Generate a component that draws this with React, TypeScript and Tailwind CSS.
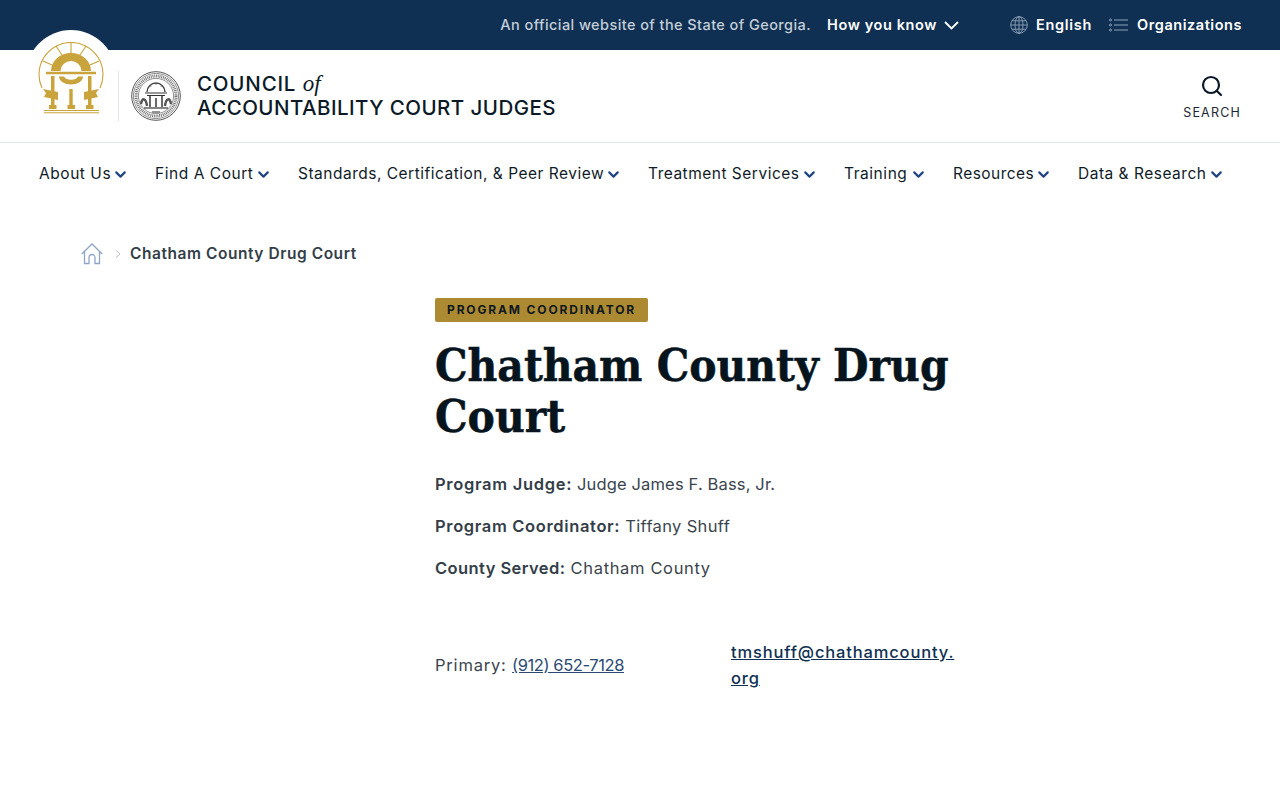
import React from 'react';
import { ChevronDown, Search, ChevronRight } from 'lucide-react';

const navItems = [
  { label: 'About Us', cls: 'w-[71px] tracking-[0.55px]' },
  { label: 'Find A Court', cls: 'w-[98px] tracking-[0.55px]' },
  { label: 'Standards, Certification, & Peer Review', cls: 'w-[305px] tracking-[0.5px]' },
  { label: 'Treatment Services', cls: 'w-[151px] tracking-[0.5px]' },
  { label: 'Training', cls: 'w-[64px] tracking-[0.55px]' },
  { label: 'Resources', cls: 'w-[80px] tracking-[0.45px]' },
  { label: 'Data & Research', cls: 'w-[128px] tracking-[0.5px]' },
];

const GoldArch = () => (
  <svg viewBox="0 0 66 74" className="w-[66px] h-[74px]" fill="none">
    <g stroke="#c9a33b" strokeWidth="1.1">
      <path d="M4 46 A 32 32 0 1 1 62 46" />
      <path d="M33 1 V11 M18 4 L24 13 M48 4 L42 13 M5 19 L14 23 M61 19 L52 23" />
    </g>
    <path d="M13 29 A20 18 0 0 1 53 29 H43.5 A10.5 10 0 0 0 22.5 29 Z" fill="#c9a33b" />
    <path d="M8 29.7 H58 V32.3 H8 Z" fill="#c9a33b" />
    <path d="M21 34.5 H26 A7.5 5 0 0 0 40 34.5 H45 A12 8 0 0 1 21 34.5 Z" fill="#c9a33b" />
    <path d="M13 34 H16.5 V64 H13 Z M31.3 47 H34.7 V64 H31.3 Z M50 34 H53.5 V64 H50 Z" fill="#c9a33b" />
    <path d="M5 47 L20 50 V58 L6 55 L8 51 Z M61 47 L46 50 V58 L60 55 L58 51 Z" fill="#c9a33b" />
    <path d="M11 63 H18.5 V67 H11 Z M29.5 63 H37 V67 H29.5 Z M48 63 H55.5 V67 H48 Z" fill="#c9a33b" />
    <path d="M6 68 H61 V69 H6 Z M6 70.3 H61 V71.3 H6 Z" fill="#c9a33b" />
  </svg>
);

const Seal = () => (
  <svg viewBox="0 0 50 50" className="w-[50px] h-[50px]" fill="none">
    <circle cx="25" cy="25" r="24.3" stroke="#555" strokeWidth="1" />
    <circle cx="25" cy="25" r="22.6" stroke="#444" strokeWidth="0.6" />
    <circle cx="25" cy="25" r="20" stroke="#777" strokeWidth="3" strokeDasharray="1 0.8" />
    <circle cx="25" cy="25" r="17.6" stroke="#444" strokeWidth="0.6" />
    <path d="M16 21 A 9 9 0 0 1 34 21" stroke="#444" strokeWidth="1.4" />
    <path d="M25 12 V14 M19 14 L20 16 M31 14 L30 16" stroke="#666" strokeWidth="0.8" />
    <path d="M14 22 H36 M16 24.5 H34" stroke="#333" strokeWidth="1.1" />
    <path d="M19 25 V36 M25 27 V36 M31 25 V36" stroke="#444" strokeWidth="1.6" />
    <path d="M10 33 C 11 26 15 27 16 35 M40 33 C 39 26 35 27 34 35" stroke="#555" strokeWidth="2.4" />
    <path d="M13 37 H37" stroke="#333" strokeWidth="1.2" />
    <path d="M21 41 H29" stroke="#666" strokeWidth="1.4" />
  </svg>
);

const GlobeLines = () => (
  <svg viewBox="0 0 18 18" className="w-[18px] h-[18px]" fill="none" stroke="#8fa3ba" strokeWidth="0.9">
    <circle cx="9" cy="9" r="8.3" />
    <ellipse cx="9" cy="9" rx="4" ry="8.3" />
    <path d="M9 .7 V17.3 M.7 9 H17.3 M2 4.8 H16 M2 13.2 H16" />
  </svg>
);

const ListLines = () => (
  <svg viewBox="0 0 20 14" className="w-[20px] h-[14px]" fill="none" stroke="#8fa3ba" strokeWidth="1">
    <circle cx="1.5" cy="2" r="1" />
    <circle cx="1.5" cy="7" r="1" />
    <circle cx="1.5" cy="12" r="1" />
    <path d="M5 2 H19 M5 7 H19 M5 12 H19" />
  </svg>
);

const HomeOutline = () => (
  <svg viewBox="0 0 22 22" className="w-[22px] h-[22px]" fill="none" stroke="#8ea6c6" strokeWidth="1.3">
    <path d="M.8 11 L11 1 L21.2 11" />
    <path d="M3.5 9 V20.5 H8 V14.5 A3 3 0 0 1 14 14.5 V20.5 H18.5 V9" />
  </svg>
);

export default function App() {
  return (
    <div className="relative min-h-[800px] bg-white font-['Inter','Liberation_Sans',sans-serif] overflow-hidden">
      {/* top bar */}
      <div className="h-[50px] bg-[#0f3052] flex items-center justify-end pr-[38px] text-[14.5px] font-semibold">
        <span className="text-[#c5ced9] font-medium tracking-[0.42px]">An official website of the State of Georgia.</span>
        <span className="text-white ml-[16px] tracking-[0.6px]">How you know</span>
        <svg viewBox="0 0 15 9" className="w-[15px] h-[9px] ml-[7px]" fill="none" stroke="#fff" strokeWidth="1.8">
          <path d="M1 1 L7.5 7.5 L14 1" />
        </svg>
        <span className="ml-[51px]"><GlobeLines /></span>
        <span className="text-white ml-[8px] tracking-[0.7px]">English</span>
        <span className="ml-[17px]"><ListLines /></span>
        <span className="text-white ml-[8px] tracking-[0.55px]">Organizations</span>
      </div>

      {/* logo circle sits over the bar */}
      <div className="absolute left-[26px] top-[30px] w-[90px] h-[90px] rounded-full bg-white" />

      {/* header */}
      <header className="relative h-[93px] border-b border-[#e3e5e8] flex items-center pl-[37px] pr-[39px]">
        <div className="absolute left-[38px] top-[-8px]"><GoldArch /></div>
        <div className="w-px h-[50px] bg-[#e3e5e8] ml-[81px]" />
        <div className="ml-[12px]"><Seal /></div>
        <div className="ml-[16px] text-[#0b1a26] text-[20.5px] leading-[24px] font-medium">
          <div><span className="tracking-[0.8px]">COUNCIL</span> <span className="font-['Liberation_Serif',serif] italic text-[23px] ml-[1px]">of</span></div>
          <div className="tracking-[0.45px]">ACCOUNTABILITY COURT JUDGES</div>
        </div>
        <div className="ml-auto flex flex-col items-center pt-[2px]">
          <Search className="w-[24px] h-[24px] text-[#0b1a26]" strokeWidth={2.2} />
          <span className="text-[12.5px] tracking-[1.2px] mt-[7px] leading-[15px] text-[#1c2733]">SEARCH</span>
        </div>
      </header>

      {/* nav */}
      <nav className="h-[62px] flex items-center pl-[39px] gap-[26px] text-[15.5px] text-[#0f1c28]">
        {navItems.map((n) => (
          <div key={n.label} className="flex items-center whitespace-nowrap">
            <span className={n.cls}>{n.label}</span>
            <ChevronDown className="w-[17px] h-[17px] ml-[2px] text-[#1f4480]" strokeWidth={3} />
          </div>
        ))}
      </nav>

      {/* breadcrumb */}
      <div className="mt-[37px] pl-[81px] flex items-center h-[24px]">
        <HomeOutline />
        <ChevronRight className="w-[14px] h-[14px] ml-[8px] text-[#a8b0ba]" strokeWidth={1.5} />
        <span className="ml-[5px] text-[15.5px] tracking-[0.55px] font-semibold text-[#333e48]">Chatham County Drug Court</span>
      </div>

      {/* content */}
      <main className="ml-[435px] w-[525px] mt-[30px]">
        <div className="inline-block bg-[#ac8a32] rounded-[2px] h-[24px] leading-[24px] px-[12px] text-[12px] font-bold tracking-[1.85px] text-[#10181f]">
          PROGRAM COORDINATOR
        </div>
        <h1 className="mt-[18px] font-['DejaVu_Serif_Condensed','Liberation_Serif',serif] font-bold text-[45.5px] leading-[51px] [-webkit-text-stroke:0.5px_#06141e] text-[#06141e]">
          Chatham County Drug Court
        </h1>
        <div className="mt-[29px] text-[16.5px] leading-[26px] text-[#3a444d] flex flex-col gap-[16px]">
          <p className="tracking-[0.15px]"><strong className="font-semibold tracking-[0.7px] text-[#333e48]">Program Judge:</strong> Judge James F. Bass, Jr.</p>
          <p className="tracking-[0.35px]"><strong className="font-semibold tracking-[0.65px] text-[#333e48]">Program Coordinator:</strong> Tiffany Shuff</p>
          <p className="tracking-[0.65px]"><strong className="font-semibold tracking-[0.42px] text-[#333e48]">County Served:</strong> Chatham County</p>
        </div>
        <div className="mt-[58px] flex items-center text-[16.5px] leading-[26px] text-[#3a444d]">
          <div className="w-[296px] tracking-[0.8px]">Primary: <a className="underline text-[#2a4a73] tracking-[-0.4px]">(912) 652-7128</a></div>
          <a className="underline font-medium text-[#0f3052] tracking-[0.85px]">tmshuff@chathamcounty.<br />org</a>
        </div>
      </main>
    </div>
  );
}
